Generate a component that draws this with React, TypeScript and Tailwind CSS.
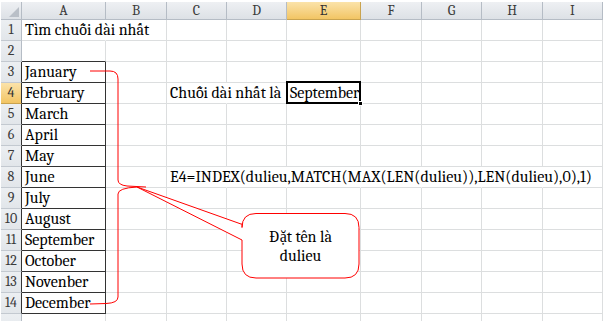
import React from "react";

const cols = ["A", "B", "C", "D", "E", "F", "G", "H", "I"];
const widths = [
  "w-[84px]",
  "w-[61px]",
  "w-[60px]",
  "w-[60px]",
  "w-[74px]",
  "w-[61px]",
  "w-[60px]",
  "w-[61px]",
  "w-[60px]",
];

const months = [
  "January",
  "February",
  "March",
  "April",
  "May",
  "June",
  "July",
  "August",
  "September",
  "October",
  "Novenber",
  "December",
];

type CellSpec = { text?: string; noRight?: boolean; blackR?: boolean; blackB?: boolean; selected?: boolean };

function getCell(r: number, c: number): CellSpec {
  const s: CellSpec = {};
  if (c === 0) {
    if (r === 1) {
      s.text = "Tìm chuỗi dài nhất";
      s.noRight = true;
    }
    if (r >= 3 && r <= 14) {
      s.text = months[r - 3];
      s.blackR = true;
      s.blackB = true;
    }
    if (r === 2) s.blackB = true;
  }
  if (r === 4 && c === 2) {
    s.text = "Chuỗi dài nhất là";
    s.noRight = true;
  }
  if (r === 4 && c === 4) {
    s.text = "September";
    s.selected = true;
  }
  if (r === 8) {
    if (c === 2) s.text = "E4=INDEX(dulieu,MATCH(MAX(LEN(dulieu)),LEN(dulieu),0),1)";
    if (c >= 2 && c <= 7) s.noRight = true;
  }
  return s;
}

export default function App() {
  const rows = Array.from({ length: 15 }, (_, i) => i + 1);
  return (
    <div className="relative w-[609px] h-[321px] overflow-hidden bg-white pl-[1px] pt-[2px] font-serif font-[Liberation_Serif,Times_New_Roman,serif] text-[16px] text-black">
      {/* header */}
      <div className="flex h-[18px]">
        <div className="relative w-[21px] h-[18px] border-r border-b border-[#b5bcc5] bg-gradient-to-b from-[#eef0f3] to-[#dde1e6]">
          <svg className="absolute right-[2px] bottom-[2px]" width="10" height="10" viewBox="0 0 10 10">
            <polygon points="10,0 10,10 0,10" fill="#b9bfc7" />
          </svg>
        </div>
        {cols.map((l, i) => (
          <div
            key={l}
            className={`${widths[i]} h-[18px] flex items-center justify-center border-r border-b text-[14px] leading-none ${
              i === 4
                ? "bg-gradient-to-b from-[#fbe3a9] to-[#f2c563] border-[#c9a34f] text-[#333]"
                : "bg-gradient-to-b from-[#eef0f3] to-[#dde1e6] border-[#b5bcc5] text-[#3b3b3b]"
            }`}
          >
            {l}
          </div>
        ))}
      </div>
      {rows.map((r) => (
        <div key={r} className="flex h-[21px]">
          <div
            className={`w-[21px] h-[21px] flex items-center justify-center border-b text-[14px] leading-none border-r ${
              r === 4
                ? "bg-gradient-to-b from-[#fbe3a9] to-[#f2c563] border-b-[#c9a34f] text-[#333]"
                : "bg-gradient-to-b from-[#eceff2] to-[#e2e6ea] border-b-[#c3c9d0] text-[#3b3b3b]"
            } ${r >= 3 && r <= 14 ? "border-r-[#333]" : "border-r-[#b5bcc5]"}`}
          >
            {r <= 14 ? r : ""}
          </div>
          {cols.map((l, c) => {
            const s = getCell(r, c);
            return (
              <div
                key={l}
                className={`relative ${widths[c]} h-[21px] border-r border-b flex items-end pl-[3px] pb-[1px] whitespace-nowrap leading-[18px] ${
                  s.noRight ? "border-r-transparent" : s.blackR ? "border-r-[#333]" : "border-r-[#dcdedf]"
                } ${s.blackB ? "border-b-[#333]" : "border-b-[#dcdedf]"}`}
              >
                {s.text && <span className="relative z-10">{s.text}</span>}
                {s.selected && (
                  <>
                    <div className="absolute left-[-1px] top-[-2px] right-[-1px] bottom-[-1px] border-2 border-black z-20" />
                    <div className="absolute right-[-3px] bottom-[-3px] w-[5px] h-[5px] bg-black border border-white z-30" />
                  </>
                )}
              </div>
            );
          })}
        </div>
      ))}

      {/* red annotations */}
      <svg className="absolute left-0 top-0 pointer-events-none z-40" width="609" height="321" viewBox="0 0 609 321">
        <path
          d="M 90 71 L 110 71 Q 118 71 118 79 L 118 180 Q 118 185 127 186 L 146 187"
          fill="none"
          stroke="#ff0000"
          strokeWidth="1"
        />
        <path
          d="M 137 187 Q 118 188 118 194 L 118 297 Q 118 303 106 303.5 L 90 304"
          fill="none"
          stroke="#ff0000"
          strokeWidth="1"
        />
        <path
          d="M 256 213.5 L 345 213.5 Q 359 213.5 359 227.5 L 359 264 Q 359 278 345 278 L 256 278 Q 242 278 242 264 L 242 240 L 137 187 L 241 224 L 242 224 L 242 227.5 Q 242 213.5 256 213.5 Z"
          fill="#ffffff"
          stroke="#ff0000"
          strokeWidth="1"
        />
      </svg>
      <div className="absolute left-[242px] top-[213px] w-[117px] h-[65px] z-50 flex flex-col items-center justify-center leading-[19px] pt-[2px]">
        <span>Đặt tên là</span>
        <span>dulieu</span>
      </div>
    </div>
  );
}
